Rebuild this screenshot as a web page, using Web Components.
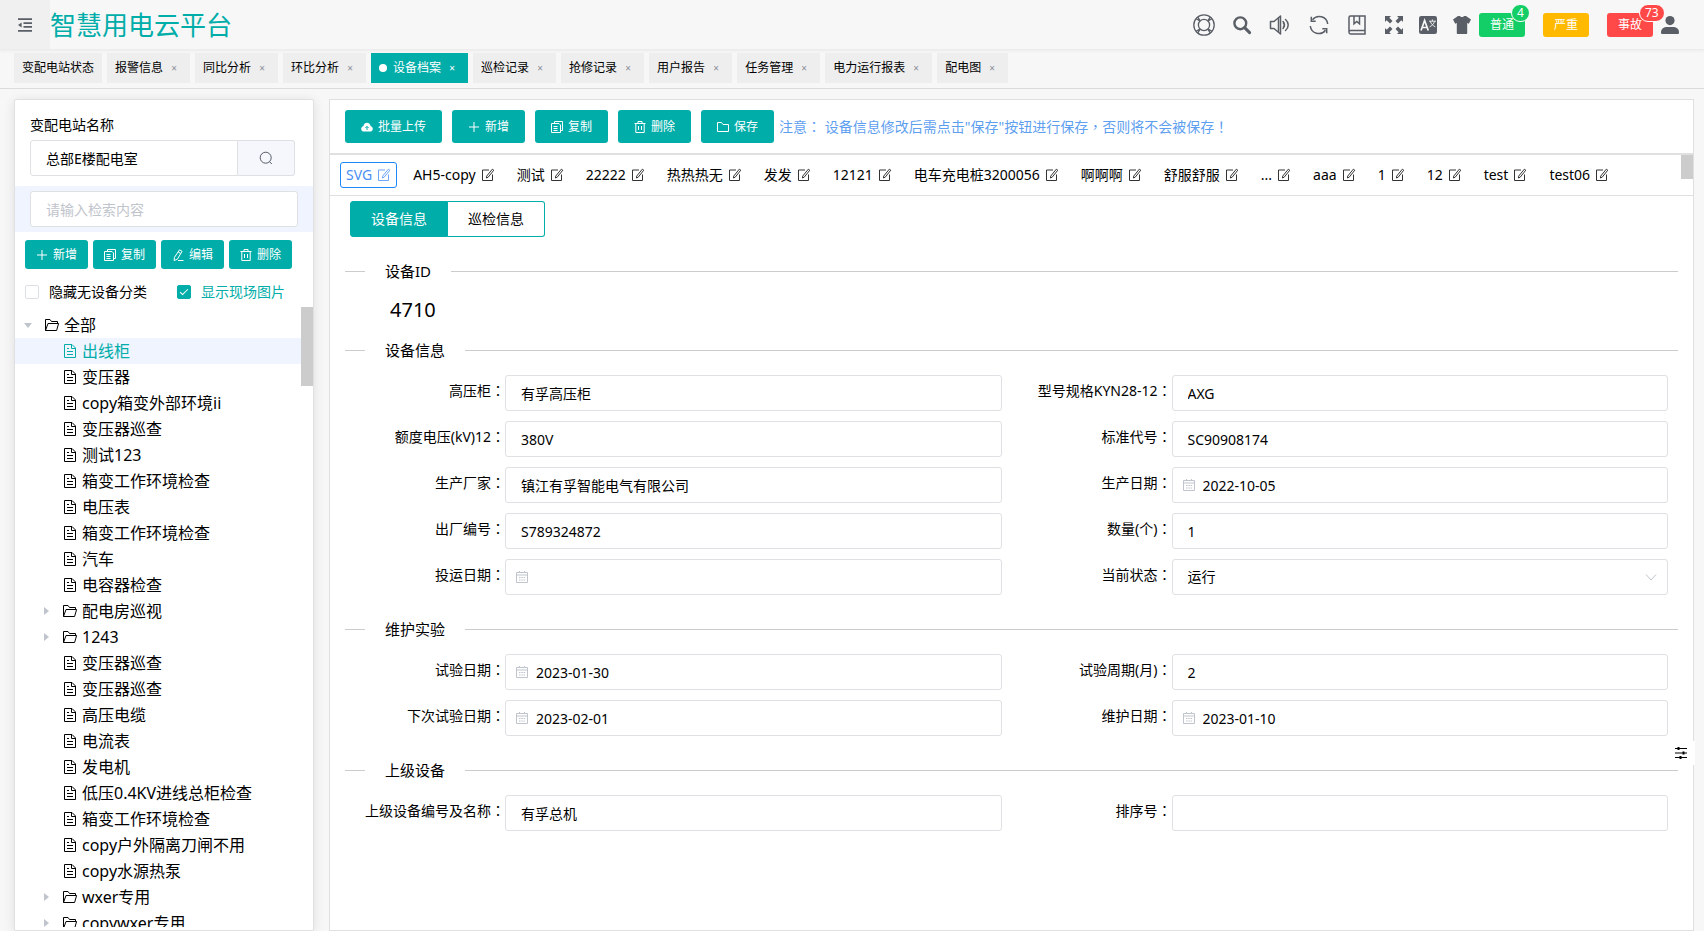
<!DOCTYPE html>
<html lang="zh-CN">
<head>
<meta charset="utf-8">
<meta name="viewport" content="width=device-width, initial-scale=1">
<title>智慧用电云平台</title>
<style>
  :root {
    --teal: #00ada9;
    --line: #dfe0e3;
    --tint: #f0f4ff;
    --ink: #000;
    --icon: #5a5e66;
  }
  body {
    margin: 0;
    background: #f7f7f7;
    color: var(--ink);
    font: 14px/22px "Noto Sans", "Noto Sans CJK SC", sans-serif;
  }
</style>
</head>
<body>
<power-app></power-app>

<script>
const ICONS = {
  fold: ['0 0 16 16', '<path d="M1 2.2h14M6.5 6.1H15M6.5 9.9H15M1 13.8h14" fill="none" stroke="currentColor" stroke-width="1.8"/><path d="M1 8l3.6-2.6v5.2z"/>'],
  buoy: ['0 0 22 22', '<g fill="none" stroke="currentColor" stroke-width="1.300"><circle cx="11" cy="11" r="10.200"/><circle cx="11" cy="11" r="5.600"/><path d="M3.200 4.800l4 2.500M4.800 3.200l2.500 4M18.800 4.800l-4 2.500M17.200 3.200l-2.500 4M3.200 17.200l4-2.500M4.800 18.800l2.500-4M18.800 17.200l-4-2.500M17.200 18.800l-2.500-4"/></g>'],
  find: ['0 0 18 18', '<circle cx="7.300" cy="7.300" r="5.900" fill="none" stroke="currentColor" stroke-width="2.400"/><path d="M11.600 11.600l5 5" stroke="currentColor" stroke-width="3" stroke-linecap="round"/>'],
  sound: ['0 0 22 22', '<g fill="none" stroke="currentColor" stroke-width="1.500" stroke-linejoin="round" stroke-linecap="round"><path d="M1.500 7.500H5L11.500 2v18L5 14.500H1.500z"/><path d="M9.500 4.500v13M14 7.500c2 2 2 5 0 7M16.500 5.500c3.600 3 3.600 8 0 11M14.500 9c1 1.200 1 2.800 0 4"/></g>'],
  sync: ['0 0 20 20', '<g fill="none" stroke="currentColor" stroke-width="1.500"><path d="M18.700 9A8.500 8.500 0 0 0 3.500 4.800M1.300 11a8.500 8.500 0 0 0 15.200 4.200"/><path d="M2.300 1.800v4.400h4.400M17.700 18.200v-4.400h-4.400"/></g>'],
  book: ['0 0 20 20', '<g fill="none" stroke="currentColor" stroke-width="1.500"><path d="M2 17.300V2.500C2 1.700 2.500 1 3.500 1H18v18H3.500C2.500 19 2 18.300 2 17.300c0-1 .6-1.800 1.600-1.800H18M7 1v7.800l2.800-2.300 2.700 2.300V1"/></g>'],
  full: ['0 0 18 18', '<path d="M0 0h6L4.300 1.700 7.500 5 5 7.500 1.700 4.300 0 6zM18 0v6l-1.700-1.700L13 7.500 10.500 5l3.200-3.300L12 0zM0 18v-6l1.700 1.700L5 10.500 7.500 13l-3.200 3.300L6 18zM18 18h-6l1.700-1.700-3.200-3.300 2.500-2.500 3.300 3.200L18 12z"/>'],
  lang: ['0 0 18 18', '<rect width="18" height="18" rx="2.200"/><g fill="none" stroke="#f7f7f7"><path d="M2 14.500L5.600 4.500l3.700 10M3.200 11.500h4.900" stroke-width="1.700"/><path d="M10 5.200h7M13.400 3.500v1.700M11.300 5.300c.8 2.600 2.600 4.500 5 5.500M15.600 5.300c-.8 2.600-2.600 4.500-5 5.500" stroke-width=".9"/></g>'],
  shirt: ['0 0 18 18', '<path d="M5 0h2c.6 1.400 3.400 1.400 4 0h2l5 3.500-2.200 4.300-1.600-.8v10c0 .6-.3 1-1 1H4.800c-.7 0-1-.4-1-1V7l-1.600.8L0 3.500z"/>'],
  user: ['0 0 18 18', '<circle cx="9" cy="4.600" r="4.600"/><path d="M0 16.500C0 12.500 3 11 6 11h6c3 0 6 1.500 6 5.500 0 1-.5 1.500-1.500 1.500h-15C.5 18 0 17.500 0 16.500z"/>'],
  search: ['0 0 14 14', '<g fill="none" stroke="currentColor" stroke-width="1"><circle cx="6.700" cy="6.700" r="5.500"/><path d="M10.600 10.800l2.200 2.200"/></g>'],
  plus: ['0 0 12 12', '<path d="M6 1v10M1 6h10" stroke="currentColor" stroke-width="1"/>'],
  copy: ['0 0 12 12', '<g fill="none" stroke="currentColor"><path d="M3.500 2.500V.5h8v9h-2M.5 2.500h7.500l1.500 1.500v7.500h-9zM2.500 5.500h4M2.500 7.500h4M2.500 9.500h4"/></g>'],
  edit: ['0 0 12 12', '<g fill="none" stroke="currentColor"><path d="M7.500.8l2.600 1.500-4.800 8-3.200 1.200.4-3.200zM6.200 3l2.600 1.500M6 11.500h5.500"/></g>'],
  trash: ['0 0 12 12', '<g fill="none" stroke="currentColor"><path d="M.5 2.500h11M4 2.500v-2h4v2M1.800 2.500v9h8.400v-9M4.500 5v4M7.500 5v4"/></g>'],
  save: ['0 0 12 12', '<path d="M.5 10.500v-9h4l1.500 2h5.500v7z" fill="none" stroke="currentColor"/>'],
  cloud: ['0 0 12 12', '<path d="M3 10.500C1.300 10.500.2 9.400.2 7.900c0-1.400 1-2.400 2.200-2.600C2.600 3.300 4.100 1.800 6 1.800s3.400 1.500 3.600 3.500c1.300.2 2.200 1.200 2.200 2.600 0 1.500-1.100 2.600-2.800 2.600z"/><path d="M6 9V5.500M4.400 7L6 5.400 7.600 7" fill="none" stroke="#00ada9"/>'],
  doc: ['0 0 14 14', '<g fill="none" stroke="currentColor"><path d="M1.500.5h7.500l3.500 3.500v9.500h-11zM8.500.5v4h4M4 4.500h2M4 7.500h6M4 10.500h6"/></g>'],
  folder: ['0 0 14 14', '<g fill="none" stroke="currentColor" stroke-linejoin="round"><path d="M.5 12.500V1.500h4.500l1.500 2h6v1.800M.5 12.500L3 5.500h10.600l-2 7z"/></g>'],
  note: ['0 0 14 14', '<g fill="none" stroke="currentColor" opacity=".8"><path d="M8 2H1.500v10.500h10V6.500"/><path d="M11.300 1.200l1.500 1-5.600 7-1.800.8.300-1.900z"/></g>'],
  date: ['0 0 14 14', '<g fill="none" stroke="currentColor"><path d="M1.500 2.500h11v10h-11zM1.500 5h11M4.500 1v2M9.500 1v2M4 7.500h1.500M6.300 7.500h1.500M8.600 7.500h1.500M4 10h1.500M6.300 10h1.500M8.600 10h1.500"/></g>'],
  down: ['0 0 12 12', '<path d="M1 3.500l5 5.500 5-5.500" fill="none" stroke="currentColor"/>'],
  caret: ['0 0 8 8', '<path d="M2 0l5 4-5 4z"/>'],
  tune: ['0 0 12 12', '<g fill="none" stroke="currentColor" stroke-width="1.200"><path d="M0 1.500h12M0 6h12M0 10.500h12"/><path d="M3.500 0v3M8.500 4.500v3M5.500 9v3" stroke-width="2"/></g>']
};

const define = (name, html, setup) => {
  const template = document.createElement('template');
  template.innerHTML = html;
  customElements.define(name, class extends HTMLElement {
    constructor() {
      super();
      this.attachShadow({ mode: 'open' }).append(template.content.cloneNode(true));
    }
    connectedCallback() { if (setup) setup(this, this.shadowRoot); }
  });
};

customElements.define('app-icon', class extends HTMLElement {
  static observedAttributes = ['name'];
  constructor() {
    super();
    this.attachShadow({ mode: 'open' }).innerHTML = `
      <style>
        :host { display: block; flex: none; width: var(--size, 14px); height: var(--size, 14px); }
        svg { display: block; width: 100%; height: 100%; fill: currentColor; overflow: visible; }
      </style><svg aria-hidden="true"></svg>`;
  }
  attributeChangedCallback(attribute, before, name) {
    const [box, shapes] = ICONS[name];
    const svg = this.shadowRoot.querySelector('svg');
    svg.setAttribute('viewBox', box);
    svg.innerHTML = shapes;
  }
});

define('icon-button', `
  <style>
    :host { display: block; flex: none; }
    button { display: block; padding: 0; border: 0; background: none; color: var(--icon); cursor: pointer; }
  </style><button type="button"><app-icon></app-icon></button>`,
  (el, root) => {
    root.querySelector('button').setAttribute('aria-label', el.getAttribute('label'));
    root.querySelector('app-icon').setAttribute('name', el.getAttribute('icon'));
  });

define('alarm-button', `
  <style>
    :host { display: block; position: relative; flex: none; }
    button { display: block; width: 46px; height: 24px; padding: 0; border: 0; border-radius: 3px;
      background: var(--tone); color: #fff; font: inherit; font-size: 12px; line-height: 24px; }
    span { position: absolute; top: -9px; left: 32px; box-sizing: border-box; height: 18px; padding: 0 5px;
      border: 1px solid #fff; border-radius: 9px; background: var(--tone); color: #fff; font-size: 12px; line-height: 16px; }
    span:empty { display: none; }
  </style><button type="button"><slot></slot></button><span></span>`,
  (el, root) => { root.querySelector('span').textContent = el.getAttribute('count') || ''; });

define('app-header', `
  <style>
    :host { display: flex; align-items: center; flex: none; height: 49px; border-bottom: 1px solid #ececec;
      box-shadow: 0 1px 3px rgba(0,0,0,.05); padding-right: 25px; }
    .fold { display: grid; place-items: center; align-self: stretch; width: 50px; background: #f0f0f0; }
    h1 { margin: 0; flex: 1; color: var(--teal); font-size: 26px; line-height: 48px; font-weight: 400; }
    nav, .alarms { display: flex; align-items: center; gap: 18px; }
    .tools { gap: 16px; margin: 0 8px 0 16px; }
    .alarms { margin-right: 8px; }
  </style>
  <div class="fold"><icon-button icon="fold" label="收起菜单" style="--size:16px"></icon-button></div>
  <h1>智慧用电云平台</h1>
  <nav>
    <icon-button icon="buoy" label="帮助" style="--size:22px"></icon-button>
    <icon-button icon="find" label="搜索" style="--size:18px"></icon-button>
    <icon-button icon="sound" label="声音" style="--size:22px"></icon-button>
    <icon-button icon="sync" label="刷新" style="--size:20px"></icon-button>
    <icon-button icon="book" label="手册" style="--size:20px"></icon-button>
    <icon-button icon="full" label="全屏" style="--size:18px"></icon-button>
  </nav>
  <nav class="tools">
    <icon-button icon="lang" label="语言" style="--size:18px"></icon-button>
    <icon-button icon="shirt" label="主题" style="--size:18px"></icon-button>
  </nav>
  <div class="alarms">
    <alarm-button count="4" style="--tone:#13ce66">普通</alarm-button>
    <alarm-button style="--tone:#ffba00">严重</alarm-button>
    <alarm-button count="73" style="--tone:#ff4949">事故</alarm-button>
  </div>
  <icon-button icon="user" label="用户" style="--size:18px"></icon-button>`);

define('page-tab', `
  <style>
    :host { display: flex; align-items: center; flex: none; height: 30px; padding: 0 8px; background: #eee; font-size: 12px; }
    a { color: inherit; text-decoration: none; white-space: nowrap; line-height: 30px; }
    i { display: none; width: 8px; height: 8px; margin-right: 6px; border-radius: 50%; background: #fff; }
    button { width: 16px; height: 16px; margin: 0 0 0 3px; padding: 0; border: 0; background: none; color: #8a9099;
      font: inherit; font-size: 10px; line-height: 16px; }
    :host([pinned]) button { display: none; }
    :host([active]) { background: var(--teal); color: #fff; }
    :host([active]) i { display: block; }
    :host([active]) button { color: #fff; }
  </style><i></i><a href="#"><slot></slot></a><button type="button" aria-label="关闭">×</button>`);

define('tab-bar', `
  <style>
    :host { display: flex; gap: 5px; flex: none; padding: 3px 14px 5px; border-bottom: 1px solid #dcdcdc; }
  </style>
  <page-tab pinned>变配电站状态</page-tab><page-tab>报警信息</page-tab><page-tab>同比分析</page-tab>
  <page-tab>环比分析</page-tab><page-tab active>设备档案</page-tab><page-tab>巡检记录</page-tab>
  <page-tab>抢修记录</page-tab><page-tab>用户报告</page-tab><page-tab>任务管理</page-tab>
  <page-tab>电力运行报表</page-tab><page-tab>配电图</page-tab>`);

define('action-button', `
  <style>
    :host { display: block; flex: none; }
    button { display: flex; align-items: center; justify-content: center; gap: 5px; width: 100%; height: 33px;
      padding: 0 16px; border: 0; border-radius: 3px; background: var(--teal); color: #fff;
      font: inherit; font-size: 12px; line-height: 16px; white-space: nowrap; --size: 12px; cursor: pointer; }
    :host([small]) button { height: 29px; padding: 0 11px; }
  </style><button type="button"><app-icon></app-icon><slot></slot></button>`,
  (el, root) => { root.querySelector('app-icon').setAttribute('name', el.getAttribute('icon')); });

define('check-option', `
  <style>
    :host { display: block; }
    label { display: flex; align-items: center; gap: 10px; }
    input { appearance: none; display: grid; place-items: center; box-sizing: border-box; width: 14px; height: 14px;
      margin: 0; border: 1px solid #dcdfe6; border-radius: 2px; background: #fff; }
    input:checked { border-color: var(--teal); background: var(--teal); }
    input:checked::after { content: ""; width: 3px; height: 7px; border: solid #fff; border-width: 0 1px 1px 0; transform: rotate(45deg); margin-bottom: 2px; }
    :host([checked]) { color: var(--teal); }
  </style><label><input type="checkbox"><slot></slot></label>`,
  (el, root) => { root.querySelector('input').checked = el.hasAttribute('checked'); });

define('tree-row', `
  <style>
    :host { display: flex; align-items: center; height: 26px; padding-left: 27px; font-size: 16px; line-height: 26px; white-space: nowrap; }
    :host([root]) { padding-left: 9px; }
    :host([active]) { background: var(--tint); color: var(--teal); }
    .caret { --size: 8px; visibility: hidden; margin-right: 13px; color: #c0c4cc; }
    :host([branch]) .caret { visibility: visible; }
    :host([root]) .caret { transform: rotate(90deg); }
    .kind { margin-right: 5px; }
  </style><app-icon class="caret" name="caret"></app-icon><app-icon class="kind"></app-icon><slot></slot>`,
  (el, root) => { root.querySelector('.kind').setAttribute('name', el.hasAttribute('branch') ? 'folder' : 'doc'); });

define('station-panel', `
  <style>
    :host { display: flex; flex-direction: column; flex: none; box-sizing: border-box; width: 300px; min-height: 0;
      padding: 14px 0 3px; border: 1px solid #e0e0e0; border-radius: 2px; background: #fff; box-shadow: 0 2px 12px rgba(0,0,0,.1); }
    label.name { margin-left: 15px; }
    input { box-sizing: border-box; min-width: 0; height: 36px; padding: 0 15px; border: 1px solid var(--line);
      border-radius: 3px; background: #fff; color: inherit; font: inherit; outline: 0; }
    input::placeholder { color: #c0c4cc; opacity: 1; }
    .station { display: flex; margin: 4px 18px 10px 15px; }
    .station input { flex: 1; border-radius: 3px 0 0 3px; }
    .station button { display: grid; place-items: center; width: 57px; padding: 0; border: 1px solid var(--line); border-left: 0;
      border-radius: 0 3px 3px 0; background: #f5f7fc; color: #555b66; }
    .filter { display: flex; padding: 5px 15px; background: var(--tint); }
    .filter input { flex: 1; }
    .actions { display: flex; gap: 5px; padding: 8px 10px 0; }
    .options { display: flex; justify-content: space-between; padding: 12px 28px 0 10px; }
    .tree { display: flex; flex: 1; min-height: 0; margin-top: 4px; overflow: hidden; }
    .rows { flex: 1; padding-top: 5px; }
    .thumb { width: 12px; height: 79px; background: #ccc; }
  </style>
  <label class="name" for="station">变配电站名称</label>
  <div class="station">
    <input id="station" value="总部E楼配电室"><button type="button" aria-label="查询"><app-icon name="search"></app-icon></button>
  </div>
  <div class="filter"><input aria-label="检索内容" placeholder="请输入检索内容"></div>
  <div class="actions">
    <action-button small icon="plus">新增</action-button><action-button small icon="copy">复制</action-button>
    <action-button small icon="edit">编辑</action-button><action-button small icon="trash">删除</action-button>
  </div>
  <div class="options"><check-option>隐藏无设备分类</check-option><check-option checked>显示现场图片</check-option></div>
  <div class="tree">
    <div class="rows">
      <tree-row root branch>全部</tree-row>
      <tree-row active>出线柜</tree-row><tree-row>变压器</tree-row><tree-row>copy箱变外部环境ii</tree-row>
      <tree-row>变压器巡查</tree-row><tree-row>测试123</tree-row><tree-row>箱变工作环境检查</tree-row>
      <tree-row>电压表</tree-row><tree-row>箱变工作环境检查</tree-row><tree-row>汽车</tree-row>
      <tree-row>电容器检查</tree-row><tree-row branch>配电房巡视</tree-row><tree-row branch>1243</tree-row>
      <tree-row>变压器巡查</tree-row><tree-row>变压器巡查</tree-row><tree-row>高压电缆</tree-row>
      <tree-row>电流表</tree-row><tree-row>发电机</tree-row><tree-row>低压0.4KV进线总柜检查</tree-row>
      <tree-row>箱变工作环境检查</tree-row><tree-row>copy户外隔离刀闸不用</tree-row><tree-row>copy水源热泵</tree-row>
      <tree-row branch>wxer专用</tree-row><tree-row branch>copywxer专用</tree-row>
    </div>
    <div class="thumb"></div>
  </div>`);

define('device-chip', `
  <style>
    :host { display: block; flex: none; }
    button { display: flex; align-items: center; gap: 5px; height: 26px; padding: 0 5px; border: 1px solid transparent;
      border-radius: 3px; background: none; color: inherit; font: inherit; line-height: 24px; white-space: nowrap; }
    :host([active]) button { border-color: #1e88f5; color: #4a8ff5; }
  </style><button type="button"><slot></slot><app-icon name="note"></app-icon></button>`);

define('form-section', `
  <style>
    :host { display: block; }
    h2 { display: flex; align-items: center; gap: 20px; margin: 0; font-size: 15px; line-height: 22px; font-weight: 400; }
    h2::before, h2::after { content: ""; width: 20px; height: 1px; background: #ccc; }
    h2::after { flex: 1; }
    .body { display: grid; grid-template-columns: 1fr 1fr; row-gap: 10px; padding: 14px 0 23px; }
    :host([compact]) .body { padding-bottom: 15px; }
  </style><h2></h2><div class="body"><slot></slot></div>`,
  (el, root) => { root.querySelector('h2').textContent = el.getAttribute('heading'); });

define('form-field', `
  <style>
    :host { display: flex; align-items: flex-start; padding-right: 10px; }
    label { width: 160px; text-align: right; line-height: 30px; white-space: nowrap; }
    label span { font-family: "Noto Sans CJK TC", sans-serif; }
    .box { position: relative; flex: 1; }
    input, select { appearance: none; display: block; box-sizing: border-box; width: 100%; height: 36px; padding: 0 15px;
      border: 1px solid var(--line); border-radius: 3px; background: #fff; color: inherit; font: inherit; outline: 0; }
    app-icon { position: absolute; top: 11px; color: #c0c4cc; pointer-events: none; }
    .date { display: none; left: 10px; }
    .down { display: none; right: 11px; top: 12px; --size: 12px; }
    :host([kind=date]) input { padding-left: 30px; }
    :host([kind=date]) .date, :host([kind=select]) .down { display: block; }
  </style>
  <label for="control"></label>
  <div class="box"><input id="control"><app-icon class="date" name="date"></app-icon><app-icon class="down" name="down"></app-icon></div>`,
  (el, root) => {
    const colon = document.createElement('span');
    colon.lang = 'zh-TW';
    colon.textContent = '：';
    root.querySelector('label').replaceChildren(el.getAttribute('label'), colon);
    const value = el.getAttribute('value') || '';
    if (el.getAttribute('kind') === 'select') {
      const select = document.createElement('select');
      select.id = 'control';
      select.add(new Option(value));
      root.querySelector('input').replaceWith(select);
    } else root.querySelector('input').value = value;
  });

define('device-panel', `
  <style>
    :host { display: flex; flex-direction: column; flex: 1; box-sizing: border-box; min-width: 0;
      border: 1px solid #e0e0e0; background: #fff; }
    .actions { display: flex; align-items: center; gap: 10px; padding: 10px 15px; border-bottom: 2px solid #e0e0e0; }
    .actions p { margin: 0 0 0 -5px; color: #5f9ff0; white-space: nowrap; }
    .actions span { font-family: "Noto Sans CJK TC", sans-serif; }
    .devices { display: flex; justify-content: space-between; height: 40px; border-bottom: 1px solid #e0e0e0; }
    .chips { display: flex; gap: 10px; align-items: center; min-width: 0; overflow: hidden; padding-left: 10px; }
    .thumb { flex: none; width: 12px; height: 24px; background: #ccc; }
    .tabs { display: flex; margin: 5px 0 23px 20px; }
    .tabs button { height: 36px; padding: 0 20px; border: 1px solid var(--teal); background: #fff; color: inherit; font: inherit; }
    .tabs button:first-child { border-radius: 3px 0 0 3px; background: var(--teal); color: #fff; }
    .tabs button:last-child { border-left: 0; border-radius: 0 3px 3px 0; }
    form { margin: 0 15px; }
    output { margin-left: 45px; font-size: 20px; line-height: 28px; }
  </style>
  <div class="actions">
    <action-button icon="cloud">批量上传</action-button><action-button icon="plus">新增</action-button>
    <action-button icon="copy">复制</action-button><action-button icon="trash">删除</action-button>
    <action-button icon="save">保存</action-button>
    <p>注意<span lang="zh-TW">：</span> 设备信息修改后需点击"保存"按钮进行保存<span lang="zh-TW">，</span>否则将不会被保存<span lang="zh-TW">！</span></p>
  </div>
  <div class="devices">
    <div class="chips">
      <device-chip active>SVG</device-chip><device-chip>AH5-copy</device-chip><device-chip>测试</device-chip>
      <device-chip>22222</device-chip><device-chip>热热热无</device-chip><device-chip>发发</device-chip>
      <device-chip>12121</device-chip><device-chip>电车充电桩3200056</device-chip><device-chip>啊啊啊</device-chip>
      <device-chip>舒服舒服</device-chip><device-chip>...</device-chip><device-chip>aaa</device-chip>
      <device-chip>1</device-chip><device-chip>12</device-chip><device-chip>test</device-chip><device-chip>test06</device-chip>
    </div>
    <div class="thumb"></div>
  </div>
  <div class="tabs"><button type="button">设备信息</button><button type="button">巡检信息</button></div>
  <form>
    <form-section compact heading="设备ID"><output>4710</output></form-section>
    <form-section heading="设备信息">
      <form-field label="高压柜" value="有孚高压柜"></form-field><form-field label="型号规格KYN28-12" value="AXG"></form-field>
      <form-field label="额度电压(kV)12" value="380V"></form-field><form-field label="标准代号" value="SC90908174"></form-field>
      <form-field label="生产厂家" value="镇江有孚智能电气有限公司"></form-field><form-field kind="date" label="生产日期" value="2022-10-05"></form-field>
      <form-field label="出厂编号" value="S789324872"></form-field><form-field label="数量(个)" value="1"></form-field>
      <form-field kind="date" label="投运日期"></form-field><form-field kind="select" label="当前状态" value="运行"></form-field>
    </form-section>
    <form-section heading="维护实验">
      <form-field kind="date" label="试验日期" value="2023-01-30"></form-field><form-field label="试验周期(月)" value="2"></form-field>
      <form-field kind="date" label="下次试验日期" value="2023-02-01"></form-field><form-field kind="date" label="维护日期" value="2023-01-10"></form-field>
    </form-section>
    <form-section heading="上级设备">
      <form-field label="上级设备编号及名称" value="有孚总机"></form-field><form-field label="排序号"></form-field>
    </form-section>
  </form>`);

define('power-app', `
  <style>
    :host { display: flex; flex-direction: column; height: 100vh; overflow: hidden; }
    main { display: flex; gap: 15px; flex: 1; min-height: 0; padding: 10px 10px 0 14px; }
    .tune { position: fixed; right: 9px; bottom: 166px; display: grid; place-items: center; width: 28px; height: 24px;
      background: #fff; --size: 12px; --icon: #000; }
  </style>
  <app-header></app-header>
  <tab-bar></tab-bar>
  <main><station-panel></station-panel><device-panel></device-panel></main>
  <icon-button class="tune" icon="tune" label="设置"></icon-button>`);
</script>
</body>
</html>
